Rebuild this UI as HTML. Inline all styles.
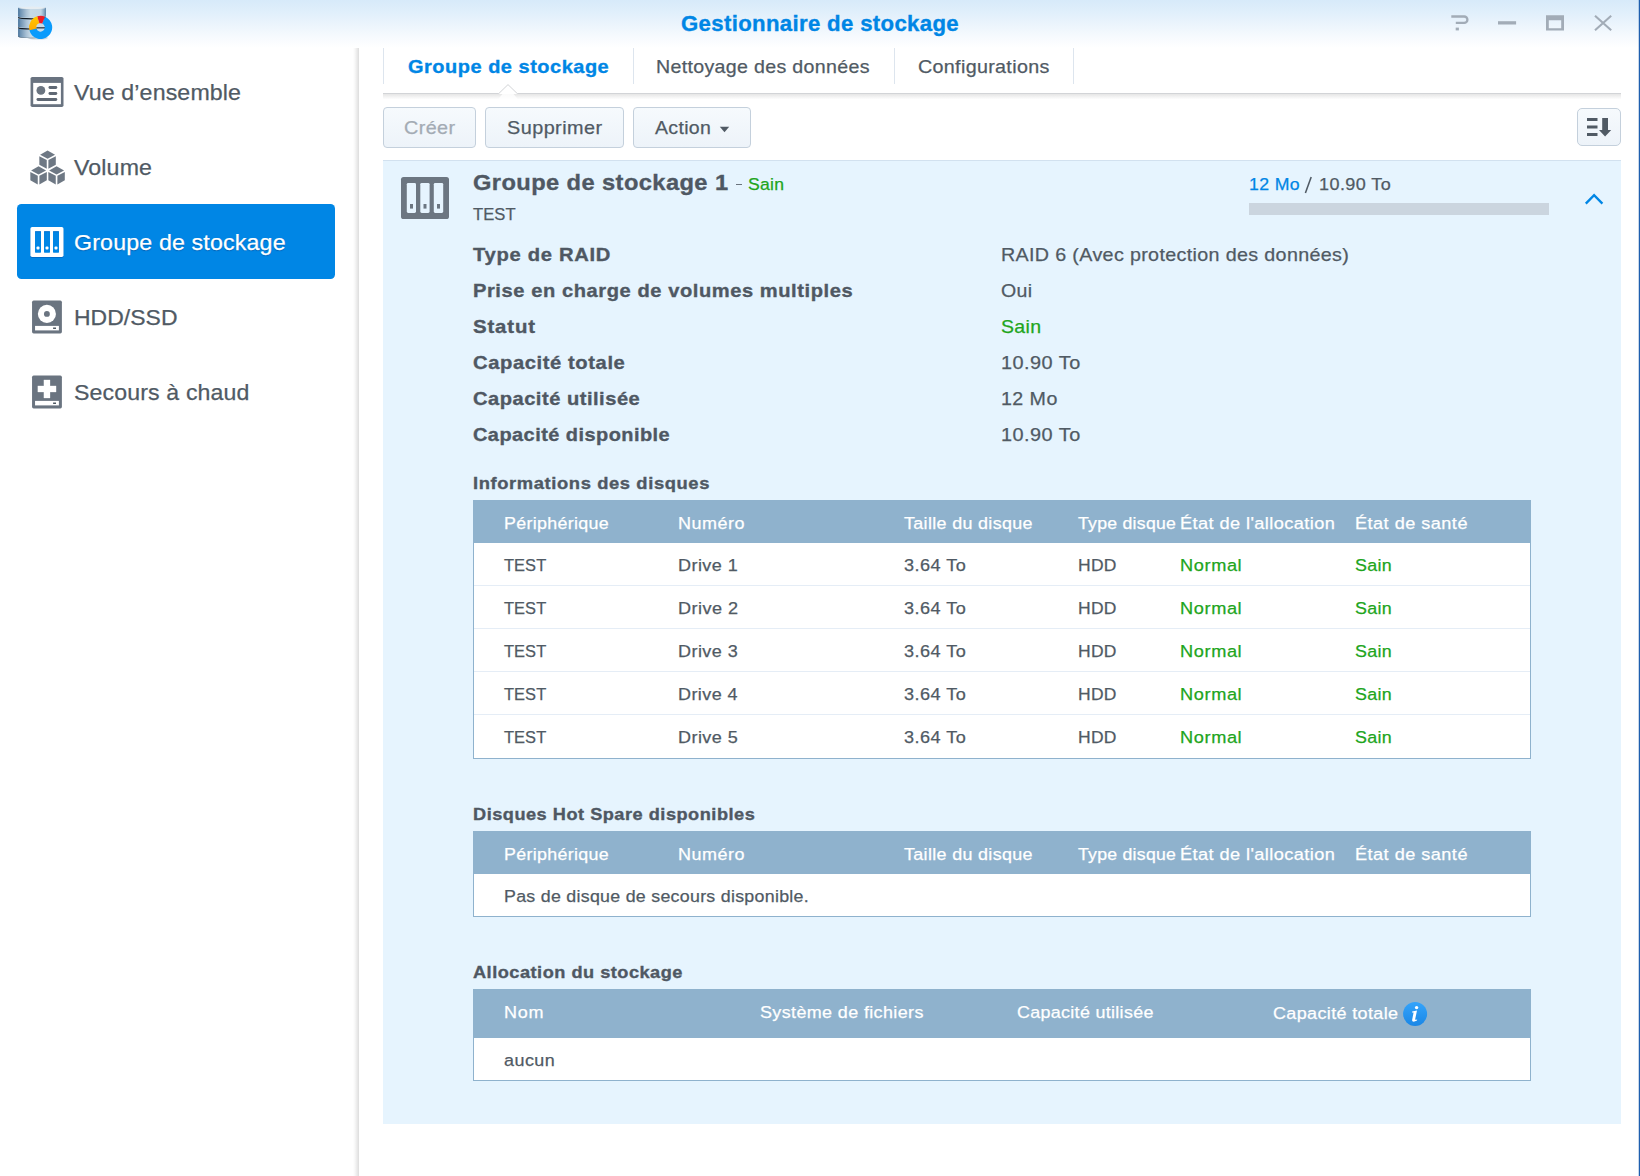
<!DOCTYPE html>
<html lang="fr">
<head>
<meta charset="utf-8">
<title>Gestionnaire de stockage</title>
<style>
html,body{margin:0;padding:0;}
body{width:1640px;height:1176px;position:relative;overflow:hidden;background:#fff;font-family:"Liberation Sans",sans-serif;}
.a{position:absolute;}
.t{position:absolute;transform-origin:0 0;white-space:nowrap;line-height:30px;height:30px;}
#titlebar{left:0;top:0;width:1640px;height:48px;background:linear-gradient(#d7eafa 0%,#e0effb 25%,#ebf4fc 50%,#f6fafe 76%,#ffffff 100%);}
#redge{left:1639px;top:0;width:1px;height:1176px;background:#1f5fae;}
#redge2{left:1638px;top:0;width:1px;height:1176px;background:rgba(31,95,174,.25);}
#sbshadow{left:353px;top:48px;width:6px;height:1128px;background:linear-gradient(90deg,rgba(0,0,0,0),rgba(0,0,0,.035) 35%,rgba(0,0,0,.135));}
#sel{left:17px;top:204px;width:318px;height:75px;background:#0086e5;border-radius:4.5px;}
.tabsep{top:48px;width:1px;height:36px;background:#dde5ee;}
.btn{box-sizing:border-box;border:1px solid #c4d0dc;border-radius:4px;background:linear-gradient(#f6fafd,#edf3f9);}
#panel{left:383px;top:160px;width:1238px;height:964px;background:#e6f4fe;border-top:1px solid #d2e1ef;box-sizing:border-box;}
.tbl{box-sizing:border-box;background:#fff;border:1px solid #8fb2cd;border-top:none;left:473px;width:1058px;}
.th{left:473px;width:1058px;background:#8fb2cd;}
.rl{left:474px;width:1056px;height:1px;background:#e5edf6;}
</style>
</head>
<body>
<div class="a" id="titlebar"></div>
<div class="a" id="sbshadow"></div>
<div class="a" id="sel"></div>
<div class="a" id="redge2"></div>
<div class="a" id="redge"></div>

<!-- tab separators -->
<div class="a tabsep" style="left:383px"></div>
<div class="a tabsep" style="left:633px"></div>
<div class="a tabsep" style="left:894px"></div>
<div class="a tabsep" style="left:1073px"></div>
<!-- tab line with notch -->
<svg class="a" style="left:383px;top:80px" width="1238" height="22" viewBox="383 80 1238 22">
<defs><linearGradient id="tsh" x1="0" y1="0" x2="0" y2="1"><stop offset="0" stop-color="#000" stop-opacity=".10"/><stop offset="1" stop-color="#000" stop-opacity="0"/></linearGradient></defs>
<rect x="383" y="94" width="1238" height="5.5" fill="url(#tsh)"/>
<path d="M498 99.5 L508 87 L518 99.5 Z" fill="#fff" opacity=".8"/>
<path d="M383 93.5 H498.8 L508 84.6 L517.2 93.5 H1621" fill="none" stroke="#d2d4d7" stroke-width="1"/>
</svg>

<!-- buttons -->
<div class="a btn" style="left:383px;top:107px;width:93px;height:41px"></div>
<div class="a btn" style="left:485px;top:107px;width:139px;height:41px"></div>
<div class="a btn" style="left:633px;top:107px;width:118px;height:41px"></div>
<div class="a btn" style="left:1577px;top:108px;width:44px;height:38px;border-radius:5px"></div>
<svg class="a" style="left:716px;top:122px" width="18" height="12" viewBox="716 122 18 12"><path d="M719.8 126.8 H729.2 L724.5 132.2 Z" fill="#505a64"/></svg>
<svg class="a" style="left:1580px;top:112px" width="38" height="30" viewBox="1580 112 38 30">
<g fill="#505a64"><rect x="1587" y="118" width="10.5" height="3"/><rect x="1587" y="125.5" width="10.5" height="3"/><rect x="1587" y="133" width="10.5" height="3"/>
<path d="M1602.2 118 H1608 V130 H1611.2 L1605.1 136.4 L1599 130 H1602.2 Z"/></g></svg>

<!-- panel -->
<div class="a" id="panel"></div>
<div class="a" style="left:1249px;top:203px;width:300px;height:12px;background:#cbd5df"></div>
<svg class="a" style="left:1580px;top:188px" width="28" height="22" viewBox="1580 188 28 22"><path d="M1585.8 203.6 L1594.1 195.2 L1602.4 203.6" fill="none" stroke="#0086e5" stroke-width="2.35" stroke-linejoin="miter"/></svg>

<svg class="a" style="left:1300px;top:174px" width="16" height="22" viewBox="1300 174 16 22"><path d="M1305.4 192.9 L1311.2 177.1" stroke="#505a64" stroke-width="1.55" fill="none"/></svg>

<div class="a" style="left:736px;top:183.8px;width:5.8px;height:1.3px;background:#6a737d"></div>

<!-- tables -->
<div class="a th" style="top:500px;height:43px"></div>
<div class="a tbl" style="top:543px;height:216px"></div>
<div class="a rl" style="top:585px"></div><div class="a rl" style="top:628px"></div><div class="a rl" style="top:671px"></div><div class="a rl" style="top:714px"></div>
<div class="a th" style="top:831px;height:43px"></div>
<div class="a tbl" style="top:874px;height:43px"></div>
<div class="a th" style="top:989px;height:49px"></div>
<div class="a tbl" style="top:1038px;height:43px"></div>

<!-- app icon -->
<svg class="a" style="left:14px;top:4px" width="42" height="40" viewBox="14 4 42 40">
<defs>
<linearGradient id="cyl" x1="0" y1="0" x2="1" y2="0"><stop offset="0" stop-color="#3f6c95"/><stop offset=".08" stop-color="#6d92b3"/><stop offset=".3" stop-color="#a9c1d5"/><stop offset=".45" stop-color="#c6d9e6"/><stop offset=".82" stop-color="#c2d6e4"/><stop offset=".94" stop-color="#86a6c1"/><stop offset="1" stop-color="#4d779d"/></linearGradient>
<linearGradient id="yel" x1="0" y1="0" x2="0" y2="1"><stop offset="0" stop-color="#ffc800"/><stop offset="1" stop-color="#ffaa00"/></linearGradient>
</defs>
<ellipse cx="38" cy="38" rx="10" ry="1.6" fill="#1d2a36" opacity=".18"/>
<path d="M18.1 28.6 V36.6 A13.9 1.7 0 0 0 45.9 36.6 V28.6 Z" fill="url(#cyl)"/>
<path d="M18.1 36 A13.9 1.7 0 0 0 45.9 36 V36.6 A13.9 1.7 0 0 1 18.1 36.6 Z" fill="#1b2732" opacity=".55"/>
<path d="M18.1 27 A13.9 1.4 0 0 0 45.9 27 V28.2 A13.9 1.4 0 0 1 18.1 28.2 Z" fill="#121b24"/>
<path d="M18.1 18.6 V26.8 A13.9 1.4 0 0 0 45.9 26.8 V18.6 Z" fill="url(#cyl)"/>
<path d="M18.1 16.8 A13.9 1.4 0 0 0 45.9 16.8 V18 A13.9 1.4 0 0 1 18.1 18 Z" fill="#121b24"/>
<path d="M18.1 7.7 V16.6 A13.9 1.4 0 0 0 45.9 16.6 V7.7 Z" fill="url(#cyl)"/>
<ellipse cx="32" cy="7.8" rx="13.9" ry="1.3" fill="#e6edf2"/>
<circle cx="40.6" cy="27.4" r="4.6" fill="#c9dbe8"/>
<path d="M36.2 27.3 H45 V28.4 H36.2 Z" fill="#121b24"/>
<path d="M44.95 16.64 A11.6 11.6 0 1 1 29.37 30.30 L36.53 28.45 A4.2 4.2 0 1 0 42.17 23.51 Z" fill="#0a9bfc"/>
<path d="M29.37 30.30 A11.6 11.6 0 0 1 37.31 16.28 L39.41 23.37 A4.2 4.2 0 0 0 36.53 28.45 Z" fill="url(#yel)"/>
<path d="M37.31 16.28 A11.6 11.6 0 0 1 44.95 16.64 L42.17 23.51 A4.2 4.2 0 0 0 39.41 23.37 Z" fill="#ee1c25"/>
</svg>

<!-- window controls -->
<svg class="a" style="left:1445px;top:10px" width="175" height="26" viewBox="1445 10 175 26">
<g fill="none" stroke="#a2acb7" stroke-width="2.3">
<path d="M1451.3 16.5 H1464.2 A3.2 3.2 0 0 1 1464.2 22.9 H1455.8"/>
<path d="M1498 22.85 H1516.1" stroke-width="3.3"/>
<path d="M1595 15.7 L1611.2 30.3 M1611.2 15.7 L1595 30.3" stroke-width="2.1"/>
</g>
<path d="M1546 15.3 H1564 V30.4 H1546 Z M1548.8 20.3 V28.2 H1561.2 V20.3 Z" fill="#a2acb7" fill-rule="evenodd"/>
<rect x="1455.7" y="27.6" width="3.2" height="2.8" fill="#a2acb7"/>
</svg>

<!-- sidebar: overview -->
<svg class="a" style="left:28px;top:74px" width="40" height="36" viewBox="28 74 40 36">
<rect x="30.55" y="76.9" width="32.95" height="30.15" rx="1.7" fill="#697380"/>
<rect x="33.2" y="82.9" width="27.7" height="21.3" fill="#fff"/>
<circle cx="40.9" cy="90.4" r="4.4" fill="#6a7480"/>
<g fill="#5f6874"><rect x="48.5" y="86.1" width="8.8" height="2.8" rx="1.4"/>
<rect x="48.5" y="92.1" width="8.8" height="2.8" rx="1.4"/>
<rect x="36.5" y="98.1" width="20.8" height="2.8" rx="1.4"/></g>
</svg>

<!-- sidebar: volume (cubes) -->
<svg class="a" style="left:28px;top:148px" width="40" height="40" viewBox="28 148 40 40">
<g id="cube" fill="#6e7884">
<path d="M47.58 150.6 L55.06 154.8 L47.58 158.85 L40.1 154.8 Z"/>
<path d="M39.34 156.2 L46.75 160 V168.8 L39.34 164.65 Z"/>
<path d="M55.8 156.2 L48.4 160 V168.8 L55.8 164.65 Z"/>
</g>
<use href="#cube" x="-9" y="15.7"/>
<use href="#cube" x="9" y="15.7"/>
</svg>

<!-- sidebar: storage pool (selected, white) -->
<svg class="a" style="left:28px;top:224px" width="40" height="36" viewBox="28 224 40 36">
<rect x="30.4" y="228" width="33.1" height="30" rx="1.8" fill="#0058b0" opacity=".55"/>
<rect x="30.4" y="226.9" width="33.1" height="30.1" rx="1.8" fill="#fff"/>
<g fill="#0086e5"><rect x="35" y="231.2" width="6" height="21.5" rx=".6"/><rect x="44" y="231.2" width="6" height="21.5" rx=".6"/><rect x="53" y="231.2" width="6" height="21.5" rx=".6"/></g>
<g fill="#0060bd" opacity=".6"><rect x="35" y="231.2" width="6" height="1"/><rect x="44" y="231.2" width="6" height="1"/><rect x="53" y="231.2" width="6" height="1"/></g>
<g fill="#fff"><rect x="36.5" y="246.5" width="3" height="3" rx="1"/><rect x="45.5" y="246.5" width="3" height="3" rx="1"/><rect x="54.5" y="246.5" width="3" height="3" rx="1"/></g>
</svg>

<!-- sidebar: HDD -->
<svg class="a" style="left:28px;top:298px" width="40" height="38" viewBox="28 298 40 38">
<rect x="32.05" y="300.6" width="29.85" height="32.8" rx="1.6" fill="#6a7480"/>
<circle cx="46.9" cy="313.9" r="9.05" fill="#fff"/>
<circle cx="46.9" cy="313.9" r="2.95" fill="#6a7480"/>
<rect x="35.05" y="325.9" width="23.85" height="4.5" fill="#fff"/>
<rect x="53.1" y="327.5" width="2.9" height="1.5" fill="#505a64"/>
</svg>

<!-- sidebar: hot spare -->
<svg class="a" style="left:28px;top:373px" width="40" height="38" viewBox="28 373 40 38">
<rect x="32.05" y="375.6" width="29.85" height="32.8" rx="1.6" fill="#6a7480"/>
<path d="M43.9 379.9 H50 V385.9 H56.05 V392 H50 V398 H43.9 V392 H37.85 V385.9 H43.9 Z" fill="#fff" stroke="#fff" stroke-width=".3" stroke-linejoin="round"/>
<rect x="35.05" y="400.9" width="23.85" height="4.5" fill="#fff"/>
<rect x="53.1" y="402.5" width="2.9" height="1.5" fill="#505a64"/>
</svg>

<!-- panel: storage pool icon -->
<svg class="a" style="left:398px;top:174px" width="54" height="48" viewBox="398 174 54 48">
<rect x="401" y="177" width="48" height="42" rx="2.6" fill="#6c7681"/>
<g fill="#e6f4fe"><rect x="406.8" y="182.9" width="9.2" height="30.1" rx="1.4"/><rect x="420.3" y="182.9" width="9.3" height="30.1" rx="1.4"/><rect x="433.8" y="182.9" width="9.4" height="30.1" rx="1.4"/></g>
<g fill="#6c7681"><rect x="410" y="204" width="3" height="4.6"/><rect x="423.5" y="204" width="3" height="4.6"/><rect x="437" y="204" width="3" height="4.6"/></g>
</svg>

<!-- info icon -->
<svg class="a" style="left:1400px;top:999px" width="30" height="30" viewBox="1400 999 30 30">
<defs><linearGradient id="inf" x1="0" y1="0" x2="0" y2="1"><stop offset="0" stop-color="#34a4fb"/><stop offset="1" stop-color="#1a87e6"/></linearGradient></defs>
<circle cx="1415.1" cy="1013.9" r="12" fill="url(#inf)"/>
<g fill="#fff"><circle cx="1416.6" cy="1007.6" r="1.7"/><path d="M1412.2 1011.4 L1417 1010.6 L1415.2 1019 Q1415 1020 1416 1019.8 L1417.2 1019.4 L1417 1020.6 Q1414.6 1021.8 1413.2 1021.6 Q1411.8 1021.2 1412.2 1019.4 L1413.6 1012.6 L1412 1012.6 Z"/></g>
</svg>

<span class="t" style="left:680.52px;top:9px;font-size:21.5px;color:#0086e5;font-weight:bold;letter-spacing:0.336px;transform:scaleX(1.0306);-webkit-text-stroke:.35px #0086e5;">Gestionnaire de stockage</span>
<span class="t" style="left:74.22px;top:77px;font-size:22.9px;color:#505a64;letter-spacing:0.133px;transform:scaleX(1.0118);-webkit-text-stroke:.25px #505a64;">Vue d’ensemble</span>
<span class="t" style="left:74.22px;top:152px;font-size:22.9px;color:#505a64;letter-spacing:0.136px;transform:scaleX(1.0121);-webkit-text-stroke:.25px #505a64;">Volume</span>
<span class="t" style="left:74.22px;top:227px;font-size:22.9px;color:#ffffff;letter-spacing:0.156px;transform:scaleX(1.0131);-webkit-text-stroke:.25px #ffffff;text-shadow:0 1px 1px rgba(0,50,120,.45);">Groupe de stockage</span>
<span class="t" style="left:74.22px;top:302px;font-size:22.9px;color:#505a64;letter-spacing:0.039px;transform:scaleX(1.0023);-webkit-text-stroke:.25px #505a64;">HDD/SSD</span>
<span class="t" style="left:74.22px;top:377px;font-size:22.9px;color:#505a64;letter-spacing:0.126px;transform:scaleX(1.0111);-webkit-text-stroke:.25px #505a64;">Secours à chaud</span>
<span class="t" style="left:408.15px;top:52px;font-size:19px;color:#0086e5;font-weight:bold;letter-spacing:0.504px;transform:scaleX(1.0495);-webkit-text-stroke:.35px #0086e5;">Groupe de stockage</span>
<span class="t" style="left:656.31px;top:52px;font-size:19px;color:#505a64;letter-spacing:0.312px;transform:scaleX(1.0315);-webkit-text-stroke:.25px #505a64;">Nettoyage des données</span>
<span class="t" style="left:917.92px;top:52px;font-size:19px;color:#505a64;letter-spacing:0.316px;transform:scaleX(1.0369);-webkit-text-stroke:.25px #505a64;">Configurations</span>
<span class="t" style="left:404.34px;top:113px;font-size:19px;color:#a3abb4;letter-spacing:0.379px;transform:scaleX(1.0402);-webkit-text-stroke:.25px #a3abb4;">Créer</span>
<span class="t" style="left:507.19px;top:113px;font-size:19px;color:#505a64;letter-spacing:0.426px;transform:scaleX(1.0442);-webkit-text-stroke:.25px #505a64;">Supprimer</span>
<span class="t" style="left:655.16px;top:113px;font-size:19px;color:#505a64;letter-spacing:0.301px;transform:scaleX(1.0273);-webkit-text-stroke:.25px #505a64;">Action</span>
<span class="t" style="left:473.11px;top:167px;font-size:22.9px;color:#4f5863;font-weight:bold;letter-spacing:0.398px;transform:scaleX(1.0339);-webkit-text-stroke:.35px #4f5863;">Groupe de stockage 1</span>
<span class="t" style="left:748.43px;top:169px;font-size:17.2px;color:#21a51c;letter-spacing:0.249px;transform:scaleX(1.0233);-webkit-text-stroke:.25px #21a51c;">Sain</span>
<span class="t" style="left:473.12px;top:199px;font-size:17.2px;color:#505a64;letter-spacing:0.039px;transform:scaleX(0.9657);-webkit-text-stroke:.25px #505a64;">TEST</span>
<span class="t" style="left:1249.08px;top:169px;font-size:17.2px;color:#0086e5;letter-spacing:0.333px;transform:scaleX(1.0297);-webkit-text-stroke:.25px #0086e5;">12 Mo</span>
<span class="t" style="left:1318.66px;top:169px;font-size:17.2px;color:#505a64;letter-spacing:0.416px;transform:scaleX(1.0477);-webkit-text-stroke:.25px #505a64;">10.90 To</span>
<span class="t" style="left:473.03px;top:240px;font-size:19px;color:#4f5863;font-weight:bold;letter-spacing:0.654px;transform:scaleX(1.0628);-webkit-text-stroke:.35px #4f5863;">Type de RAID</span>
<span class="t" style="left:473.03px;top:276px;font-size:19px;color:#4f5863;font-weight:bold;letter-spacing:0.539px;transform:scaleX(1.0578);-webkit-text-stroke:.35px #4f5863;">Prise en charge de volumes multiples</span>
<span class="t" style="left:473.03px;top:312px;font-size:19px;color:#4f5863;font-weight:bold;letter-spacing:0.779px;transform:scaleX(1.0746);-webkit-text-stroke:.35px #4f5863;">Statut</span>
<span class="t" style="left:473.03px;top:348px;font-size:19px;color:#4f5863;font-weight:bold;letter-spacing:0.557px;transform:scaleX(1.0620);-webkit-text-stroke:.35px #4f5863;">Capacité totale</span>
<span class="t" style="left:473.03px;top:384px;font-size:19px;color:#4f5863;font-weight:bold;letter-spacing:0.495px;transform:scaleX(1.0562);-webkit-text-stroke:.35px #4f5863;">Capacité utilisée</span>
<span class="t" style="left:473.03px;top:420px;font-size:19px;color:#4f5863;font-weight:bold;letter-spacing:0.452px;transform:scaleX(1.0484);-webkit-text-stroke:.35px #4f5863;">Capacité disponible</span>
<span class="t" style="left:1001.11px;top:240px;font-size:19px;color:#505a64;letter-spacing:0.329px;transform:scaleX(1.0371);-webkit-text-stroke:.25px #505a64;">RAID 6 (Avec protection des données)</span>
<span class="t" style="left:1001.11px;top:276px;font-size:19px;color:#505a64;letter-spacing:0.379px;transform:scaleX(1.0279);-webkit-text-stroke:.25px #505a64;">Oui</span>
<span class="t" style="left:1001.11px;top:312px;font-size:19px;color:#21a51c;letter-spacing:0.329px;transform:scaleX(1.0282);-webkit-text-stroke:.25px #21a51c;">Sain</span>
<span class="t" style="left:1001.11px;top:348px;font-size:19px;color:#505a64;letter-spacing:0.454px;transform:scaleX(1.0471);-webkit-text-stroke:.25px #505a64;">10.90 To</span>
<span class="t" style="left:1001.11px;top:384px;font-size:19px;color:#505a64;letter-spacing:0.415px;transform:scaleX(1.0337);-webkit-text-stroke:.25px #505a64;">12 Mo</span>
<span class="t" style="left:1001.11px;top:420px;font-size:19px;color:#505a64;letter-spacing:0.454px;transform:scaleX(1.0471);-webkit-text-stroke:.25px #505a64;">10.90 To</span>
<span class="t" style="left:473.28px;top:468px;font-size:17.2px;color:#4f5863;font-weight:bold;letter-spacing:0.572px;transform:scaleX(1.0679);-webkit-text-stroke:.35px #4f5863;">Informations des disques</span>
<span class="t" style="left:473.28px;top:799px;font-size:17.2px;color:#4f5863;font-weight:bold;letter-spacing:0.483px;transform:scaleX(1.0568);-webkit-text-stroke:.35px #4f5863;">Disques Hot Spare disponibles</span>
<span class="t" style="left:473.28px;top:957px;font-size:17.2px;color:#4f5863;font-weight:bold;letter-spacing:0.472px;transform:scaleX(1.0574);-webkit-text-stroke:.35px #4f5863;">Allocation du stockage</span>
<span class="t" style="left:503.84px;top:508px;font-size:17.2px;color:#ffffff;letter-spacing:0.315px;transform:scaleX(1.0375);-webkit-text-stroke:.25px #ffffff;">Périphérique</span>
<span class="t" style="left:677.68px;top:508px;font-size:17.2px;color:#ffffff;letter-spacing:0.491px;transform:scaleX(1.0462);-webkit-text-stroke:.25px #ffffff;">Numéro</span>
<span class="t" style="left:903.72px;top:508px;font-size:17.2px;color:#ffffff;letter-spacing:0.327px;transform:scaleX(1.0416);-webkit-text-stroke:.25px #ffffff;">Taille du disque</span>
<span class="t" style="left:1078.16px;top:508px;font-size:17.2px;color:#ffffff;letter-spacing:0.253px;transform:scaleX(1.0284);-webkit-text-stroke:.25px #ffffff;">Type disque</span>
<span class="t" style="left:1179.99px;top:508px;font-size:17.2px;color:#ffffff;letter-spacing:0.391px;transform:scaleX(1.0574);-webkit-text-stroke:.25px #ffffff;">État de l'allocation</span>
<span class="t" style="left:1354.65px;top:508px;font-size:17.2px;color:#ffffff;letter-spacing:0.449px;transform:scaleX(1.0542);-webkit-text-stroke:.25px #ffffff;">État de santé</span>
<span class="t" style="left:503.84px;top:839px;font-size:17.2px;color:#ffffff;letter-spacing:0.315px;transform:scaleX(1.0375);-webkit-text-stroke:.25px #ffffff;">Périphérique</span>
<span class="t" style="left:677.68px;top:839px;font-size:17.2px;color:#ffffff;letter-spacing:0.491px;transform:scaleX(1.0462);-webkit-text-stroke:.25px #ffffff;">Numéro</span>
<span class="t" style="left:903.72px;top:839px;font-size:17.2px;color:#ffffff;letter-spacing:0.327px;transform:scaleX(1.0416);-webkit-text-stroke:.25px #ffffff;">Taille du disque</span>
<span class="t" style="left:1078.16px;top:839px;font-size:17.2px;color:#ffffff;letter-spacing:0.253px;transform:scaleX(1.0284);-webkit-text-stroke:.25px #ffffff;">Type disque</span>
<span class="t" style="left:1179.99px;top:839px;font-size:17.2px;color:#ffffff;letter-spacing:0.391px;transform:scaleX(1.0574);-webkit-text-stroke:.25px #ffffff;">État de l'allocation</span>
<span class="t" style="left:1354.65px;top:839px;font-size:17.2px;color:#ffffff;letter-spacing:0.449px;transform:scaleX(1.0542);-webkit-text-stroke:.25px #ffffff;">État de santé</span>
<span class="t" style="left:504.44px;top:550px;font-size:17.2px;color:#505a64;letter-spacing:0.059px;transform:scaleX(0.9565);-webkit-text-stroke:.25px #505a64;">TEST</span>
<span class="t" style="left:677.68px;top:550px;font-size:17.2px;color:#505a64;letter-spacing:0.413px;transform:scaleX(1.0492);-webkit-text-stroke:.25px #505a64;">Drive 1</span>
<span class="t" style="left:903.72px;top:550px;font-size:17.2px;color:#505a64;letter-spacing:0.454px;transform:scaleX(1.0531);-webkit-text-stroke:.25px #505a64;">3.64 To</span>
<span class="t" style="left:1078.16px;top:550px;font-size:17.2px;color:#505a64;letter-spacing:0.295px;transform:scaleX(1.0170);-webkit-text-stroke:.25px #505a64;">HDD</span>
<span class="t" style="left:1179.99px;top:550px;font-size:17.2px;color:#21a51c;letter-spacing:0.579px;transform:scaleX(1.0576);-webkit-text-stroke:.25px #21a51c;">Normal</span>
<span class="t" style="left:1354.65px;top:550px;font-size:17.2px;color:#21a51c;letter-spacing:0.342px;transform:scaleX(1.0386);-webkit-text-stroke:.25px #21a51c;">Sain</span>
<span class="t" style="left:504.44px;top:593px;font-size:17.2px;color:#505a64;letter-spacing:0.059px;transform:scaleX(0.9565);-webkit-text-stroke:.25px #505a64;">TEST</span>
<span class="t" style="left:677.68px;top:593px;font-size:17.2px;color:#505a64;letter-spacing:0.436px;transform:scaleX(1.0525);-webkit-text-stroke:.25px #505a64;">Drive 2</span>
<span class="t" style="left:903.72px;top:593px;font-size:17.2px;color:#505a64;letter-spacing:0.454px;transform:scaleX(1.0531);-webkit-text-stroke:.25px #505a64;">3.64 To</span>
<span class="t" style="left:1078.16px;top:593px;font-size:17.2px;color:#505a64;letter-spacing:0.295px;transform:scaleX(1.0170);-webkit-text-stroke:.25px #505a64;">HDD</span>
<span class="t" style="left:1179.99px;top:593px;font-size:17.2px;color:#21a51c;letter-spacing:0.579px;transform:scaleX(1.0576);-webkit-text-stroke:.25px #21a51c;">Normal</span>
<span class="t" style="left:1354.65px;top:593px;font-size:17.2px;color:#21a51c;letter-spacing:0.342px;transform:scaleX(1.0386);-webkit-text-stroke:.25px #21a51c;">Sain</span>
<span class="t" style="left:504.44px;top:636px;font-size:17.2px;color:#505a64;letter-spacing:0.059px;transform:scaleX(0.9565);-webkit-text-stroke:.25px #505a64;">TEST</span>
<span class="t" style="left:677.68px;top:636px;font-size:17.2px;color:#505a64;letter-spacing:0.413px;transform:scaleX(1.0492);-webkit-text-stroke:.25px #505a64;">Drive 3</span>
<span class="t" style="left:903.72px;top:636px;font-size:17.2px;color:#505a64;letter-spacing:0.454px;transform:scaleX(1.0531);-webkit-text-stroke:.25px #505a64;">3.64 To</span>
<span class="t" style="left:1078.16px;top:636px;font-size:17.2px;color:#505a64;letter-spacing:0.295px;transform:scaleX(1.0170);-webkit-text-stroke:.25px #505a64;">HDD</span>
<span class="t" style="left:1179.99px;top:636px;font-size:17.2px;color:#21a51c;letter-spacing:0.579px;transform:scaleX(1.0576);-webkit-text-stroke:.25px #21a51c;">Normal</span>
<span class="t" style="left:1354.65px;top:636px;font-size:17.2px;color:#21a51c;letter-spacing:0.342px;transform:scaleX(1.0386);-webkit-text-stroke:.25px #21a51c;">Sain</span>
<span class="t" style="left:504.44px;top:679px;font-size:17.2px;color:#505a64;letter-spacing:0.059px;transform:scaleX(0.9565);-webkit-text-stroke:.25px #505a64;">TEST</span>
<span class="t" style="left:677.68px;top:679px;font-size:17.2px;color:#505a64;letter-spacing:0.395px;transform:scaleX(1.0468);-webkit-text-stroke:.25px #505a64;">Drive 4</span>
<span class="t" style="left:903.72px;top:679px;font-size:17.2px;color:#505a64;letter-spacing:0.454px;transform:scaleX(1.0531);-webkit-text-stroke:.25px #505a64;">3.64 To</span>
<span class="t" style="left:1078.16px;top:679px;font-size:17.2px;color:#505a64;letter-spacing:0.295px;transform:scaleX(1.0170);-webkit-text-stroke:.25px #505a64;">HDD</span>
<span class="t" style="left:1179.99px;top:679px;font-size:17.2px;color:#21a51c;letter-spacing:0.579px;transform:scaleX(1.0576);-webkit-text-stroke:.25px #21a51c;">Normal</span>
<span class="t" style="left:1354.65px;top:679px;font-size:17.2px;color:#21a51c;letter-spacing:0.342px;transform:scaleX(1.0386);-webkit-text-stroke:.25px #21a51c;">Sain</span>
<span class="t" style="left:504.44px;top:722px;font-size:17.2px;color:#505a64;letter-spacing:0.059px;transform:scaleX(0.9565);-webkit-text-stroke:.25px #505a64;">TEST</span>
<span class="t" style="left:677.68px;top:722px;font-size:17.2px;color:#505a64;letter-spacing:0.410px;transform:scaleX(1.0488);-webkit-text-stroke:.25px #505a64;">Drive 5</span>
<span class="t" style="left:903.72px;top:722px;font-size:17.2px;color:#505a64;letter-spacing:0.454px;transform:scaleX(1.0531);-webkit-text-stroke:.25px #505a64;">3.64 To</span>
<span class="t" style="left:1078.16px;top:722px;font-size:17.2px;color:#505a64;letter-spacing:0.295px;transform:scaleX(1.0170);-webkit-text-stroke:.25px #505a64;">HDD</span>
<span class="t" style="left:1179.99px;top:722px;font-size:17.2px;color:#21a51c;letter-spacing:0.579px;transform:scaleX(1.0576);-webkit-text-stroke:.25px #21a51c;">Normal</span>
<span class="t" style="left:1354.65px;top:722px;font-size:17.2px;color:#21a51c;letter-spacing:0.342px;transform:scaleX(1.0386);-webkit-text-stroke:.25px #21a51c;">Sain</span>
<span class="t" style="left:503.63px;top:881px;font-size:17.2px;color:#505a64;letter-spacing:0.274px;transform:scaleX(1.0352);-webkit-text-stroke:.25px #505a64;">Pas de disque de secours disponible.</span>
<span class="t" style="left:503.63px;top:997px;font-size:17.2px;color:#ffffff;letter-spacing:0.760px;transform:scaleX(1.0466);-webkit-text-stroke:.25px #ffffff;">Nom</span>
<span class="t" style="left:760.14px;top:997px;font-size:17.2px;color:#ffffff;letter-spacing:0.361px;transform:scaleX(1.0441);-webkit-text-stroke:.25px #ffffff;">Système de fichiers</span>
<span class="t" style="left:1016.60px;top:997px;font-size:17.2px;color:#ffffff;letter-spacing:0.307px;transform:scaleX(1.0410);-webkit-text-stroke:.25px #ffffff;">Capacité utilisée</span>
<span class="t" style="left:1272.78px;top:998px;font-size:17.2px;color:#ffffff;letter-spacing:0.347px;transform:scaleX(1.0462);-webkit-text-stroke:.25px #ffffff;">Capacité totale</span>
<span class="t" style="left:504.11px;top:1045px;font-size:17.2px;color:#505a64;letter-spacing:0.460px;transform:scaleX(1.0425);-webkit-text-stroke:.25px #505a64;">aucun</span>
</body>
</html>
